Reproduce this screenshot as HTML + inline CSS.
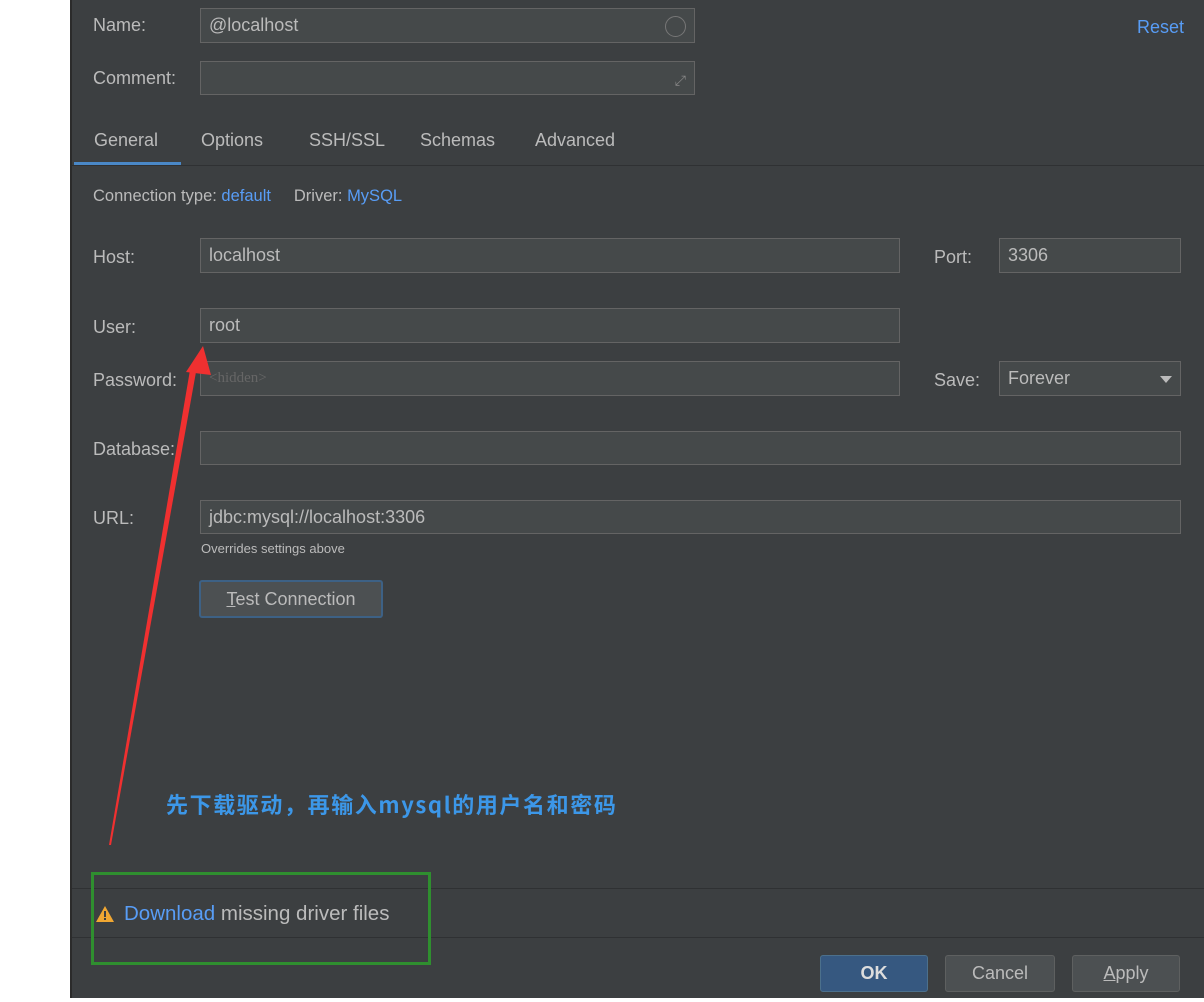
<!DOCTYPE html>
<html><head><meta charset="utf-8"><style>
body{margin:0;width:1204px;height:1002px;background:#fff;position:relative;overflow:hidden;font-family:"Liberation Sans","Noto Sans CJK SC",sans-serif;font-size:18px;color:#bbbbbb}
.p{position:absolute;left:70px;top:0;width:1134px;height:998px;background:#3c3f41;border-left:2px solid #2b2b2b}
.a{position:absolute}
.f{position:absolute;background:#45494a;border:1px solid #646464;box-sizing:border-box;color:#bbb;padding-left:8px;line-height:32px}
.l{position:absolute;color:#bbb}
.b{color:#589df6}
.btn{position:absolute;border:1px solid #5e6060;background:#4c5052;border-radius:3px;box-sizing:border-box;text-align:center;line-height:34px;color:#bbb}
</style></head><body>
<div class="p"></div>
<div class="l" style="left:93px;top:15px">Name:</div>
<div class="f" style="left:200px;top:8px;width:495px;height:35px">@localhost<span class="a" style="right:8px;top:7px;width:19px;height:19px;border:1px solid #777;border-radius:50%"></span></div>
<div class="a b" style="left:1137px;top:17px">Reset</div>
<div class="l" style="left:93px;top:68px">Comment:</div>
<div class="f" style="left:200px;top:61px;width:495px;height:34px"><span class="a" style="right:8px;top:2px;color:#888;font-size:14px">⤢</span></div>
<div class="l" style="left:94px;top:130px">General</div>
<div class="l" style="left:201px;top:130px">Options</div>
<div class="l" style="left:309px;top:130px">SSH/SSL</div>
<div class="l" style="left:420px;top:130px">Schemas</div>
<div class="l" style="left:535px;top:130px">Advanced</div>
<div class="a" style="left:74px;top:162px;width:107px;height:4px;background:#4a88c7"></div>
<div class="a" style="left:72px;top:165px;width:1132px;height:1px;background:#2f3133"></div>
<div class="l" style="left:93px;top:187px;font-size:16.5px">Connection type: <span class="b">default</span>&nbsp;&nbsp;&nbsp;&nbsp; Driver: <span class="b">MySQL</span></div>
<div class="l" style="left:93px;top:247px">Host:</div>
<div class="f" style="left:200px;top:238px;width:700px;height:35px">localhost</div>
<div class="l" style="left:934px;top:247px">Port:</div>
<div class="f" style="left:999px;top:238px;width:182px;height:35px">3306</div>
<div class="l" style="left:93px;top:317px">User:</div>
<div class="f" style="left:200px;top:308px;width:700px;height:35px">root</div>
<div class="l" style="left:93px;top:370px">Password:</div>
<div class="f" style="left:200px;top:361px;width:700px;height:35px;color:#666;font-family:'Liberation Serif',serif;font-size:15px">&lt;hidden&gt;</div>
<div class="l" style="left:934px;top:370px">Save:</div>
<div class="f" style="left:999px;top:361px;width:182px;height:35px">Forever<span class="a" style="right:8px;top:14px;border:6px solid transparent;border-top:7px solid #bbb;border-bottom:0"></span></div>
<div class="l" style="left:93px;top:439px">Database:</div>
<div class="f" style="left:200px;top:431px;width:981px;height:34px"></div>
<div class="l" style="left:93px;top:508px">URL:</div>
<div class="f" style="left:200px;top:500px;width:981px;height:34px">jdbc:mysql://localhost:3306</div>
<div class="l" style="left:201px;top:541px;font-size:13px">Overrides settings above</div>
<div class="btn" style="left:199px;top:580px;width:184px;height:38px;border:2px solid #3d6185"><u>T</u>est Connection</div>
<div class="a" style="left:166px;top:788px;color:#3c97e8;font-size:22px;letter-spacing:1.6px;font-weight:bold;font-family:'Noto Sans CJK SC',sans-serif">先下载驱动，再输入mysql的用户名和密码</div>
<div class="a" style="left:72px;top:888px;width:1132px;height:1px;background:#2f3133"></div>
<div class="a" style="left:72px;top:937px;width:1132px;height:1px;background:#2f3133"></div>
<svg class="a" style="left:95px;top:905px" width="20" height="18"><polygon points="10,1 19,17 1,17" fill="#f0a732"/><rect x="9" y="6" width="2" height="6" fill="#3c3f41"/><rect x="9" y="13" width="2" height="2" fill="#3c3f41"/></svg>
<div class="l" style="left:124px;top:902px;font-size:20.5px"><span class="b">Download</span> missing driver files</div>
<div class="a" style="left:91px;top:872px;width:334px;height:87px;border:3px solid #2f8f2f"></div>
<div class="btn" style="left:820px;top:955px;width:108px;height:37px;background:#365880;border-color:#4c708c;color:#ddd;font-weight:bold">OK</div>
<div class="btn" style="left:945px;top:955px;width:110px;height:37px">Cancel</div>
<div class="btn" style="left:1072px;top:955px;width:108px;height:37px"><u>A</u>pply</div>
<svg class="a" style="left:0;top:0" width="1204" height="1002"><polygon points="109,845 111,845 196,372 190,370" fill="#f03030"/><polygon points="203,346 186,372 211,375" fill="#f03030"/></svg>
</body></html>
